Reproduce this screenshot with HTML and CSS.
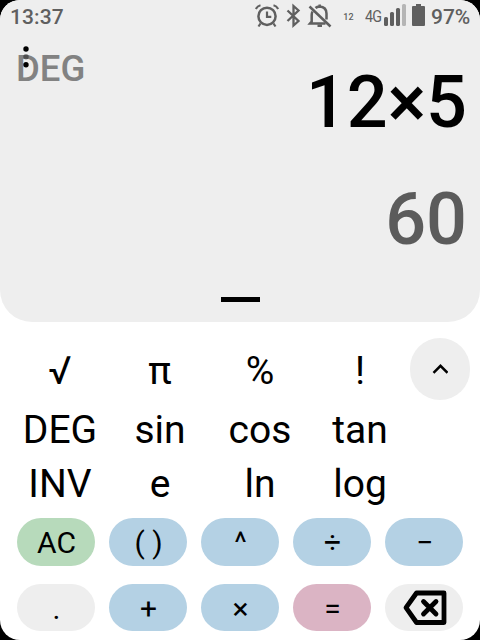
FILE: index.html
```html
<!DOCTYPE html>
<html lang="en">
<head>
<meta charset="utf-8">
<title>Calculator</title>
<link rel="stylesheet" href="styles.css">
</head>
<body>
<main class="screen">
  <section class="display">
    <header class="status">
      <span class="clock">13:37</span>
      <svg class="status-icons" width="80" height="32" viewBox="0 0 80 32" fill="none" stroke="#5f5f5f">
        <circle cx="12" cy="16.3" r="8.6" stroke-width="2.5"/>
        <path d="M12 11.5v5.3h4.3" stroke-width="2.2"/>
        <path d="M.8 9Q2.5 6 5.5 5.3M23.2 9Q21.5 6 18.5 5.3M5.5 23.500l-2 3M18.5 23.500l2 3" stroke-width="2.200"/>
        <path d="M32.500 10.500l11 10.500-5 4.500V6l5 4.500-11 10.500" stroke-width="2.300"/>
        <path d="M54.500 6.500l21 20" stroke-width="2.500"/>
        <path d="M60.500 8q1.500-1.300 4-1.500 7 .5 7 7v6M57.500 11.500q-.8 1.500-.8 3.500v6.500l-1.700 2h15.500" stroke-width="2.500"/>
        <path d="M62.500 25.700h4.500M64.700 4.500v2" stroke-width="2.500"/>
      </svg>
      <span class="small-count">12</span>
      <span class="network">4G</span>
      <svg class="signal" width="23" height="22" viewBox="0 0 23 22" fill="#5f5f5f">
        <rect x="0" y="13" width="4" height="9" rx="1.500"/>
        <rect x="6" y="8" width="4" height="14" rx="1.500"/>
        <rect x="12" y="4" width="4" height="18" rx="1.500"/>
        <rect x="18" y="0" width="4" height="22" rx="1.500" fill="#b5b5b5"/>
      </svg>
      <svg class="battery" width="13" height="22" viewBox="0 0 13 22" fill="#5f5f5f">
        <path d="M4 0h5v2h3q1 0 1 1v18q0 1-1 1H1q-1 0-1-1V3q0-1 1-1h3z"/>
      </svg>
      <span class="percent">97%</span>
    </header>
    <div class="mode">DEG
      <svg class="menu" width="6" height="24" viewBox="0 0 6 24">
        <circle cx="3" cy="4" r="2.700"/><circle cx="3" cy="11.700" r="2.700" opacity=".4"/><circle cx="3" cy="19.700" r="2.700"/>
      </svg>
    </div>
    <div class="expression">12×5</div>
    <div class="result">60</div>
    <div class="handle"></div>
  </section>

  <section class="functions">
    <span>√</span><span>π</span><span>%</span><span>!</span>
    <button class="toggle" aria-label="Collapse">
      <svg width="16" height="10" viewBox="0 0 16 10" fill="none" stroke="#000" stroke-width="2.500"><path d="M1.500 8.800l7-7 7 7"/></svg>
    </button>
    <span>DEG</span><span>sin</span><span>cos</span><span>tan</span><i></i>
    <span>INV</span><span>e</span><span>ln</span><span>log</span><i></i>
  </section>

  <section class="keys">
    <button class="key clear">AC</button>
    <button class="key">( )</button>
    <button class="key">^</button>
    <button class="key">÷</button>
    <button class="key">−</button>
    <button class="key plain">.</button>
    <button class="key">+</button>
    <button class="key">×</button>
    <button class="key equals">=</button>
    <button class="key plain" aria-label="Backspace">
      <svg class="backspace" width="44" height="36" viewBox="0 0 44 36" fill="none" stroke="#000" stroke-linejoin="round" stroke-linecap="round">
        <path d="M13.500 3H41v29.500H13.500L3 17.700z" stroke-width="4.800"/>
        <path d="M20.500 11.500l12.500 12.500M33 11.500l-12.500 12.500" stroke-width="4.800"/>
      </svg>
    </button>
  </section>
</main>
</body>
</html>
```
FILE: styles.css
```css
* { box-sizing: border-box; }

body {
  margin: 0;
  background: #000;
  font-family: Roboto, "Liberation Sans", sans-serif;
}

button {
  border: 0;
  padding: 0;
  font: inherit;
  color: #000;
}

.screen {
  width: 480px;
  height: 640px;
  background: #fff;
  border-radius: 20px;
  overflow: hidden;
}

.display {
  height: 322px;
  background: #eee;
  border-radius: 0 0 32px 32px;
  display: flex;
  flex-direction: column;
}

.status {
  height: 32px;
  flex: none;
  display: grid;
  grid-template-columns: 245px 110px 19px 28px 19px 1fr;
  padding-left: 10px;
  font-size: 21px;
  line-height: 34px;
  color: #5f5f5f;
}

.status > * { grid-row: 1; white-space: nowrap; }
.clock { grid-column: 1; font-weight: 500; letter-spacing: .1px; }
.status-icons { grid-column: 2; }
.small-count { grid-column: 2; justify-self: end; margin-right: 11px; font-size: 9px; font-weight: 500; letter-spacing: .3px; }
.network { grid-column: 3; font-size: 16.5px; letter-spacing: -.8px; transform: scaleX(.87); transform-origin: left; }
.signal { grid-column: 4; margin-top: 4px; }
.battery { grid-column: 5; margin-top: 4px; }
.percent { grid-column: 6; font-weight: 500; }

.mode {
  position: relative;
  height: 36px;
  flex: none;
  margin: 18px 0 0 16px;
  font-size: 36.5px;
  font-weight: 500;
  line-height: 37px;
  color: #828282;
}

.menu { position: absolute; left: 6.5px; top: -5px; fill: #000; }

.expression, .result {
  height: 84px;
  flex: none;
  padding-right: 13px;
  text-align: right;
  font-size: 72px;
  font-weight: 500;
  line-height: 84px;
}

.expression { margin-top: -25px; }
.result { margin-top: 33px; color: #5b5b5b; }

.handle {
  width: 39px;
  height: 5px;
  flex: none;
  margin: 35px 0 0 221px;
  background: #000;
}

.functions {
  height: 196px;
  padding: 16px 0 0 10px;
  display: grid;
  grid-template-columns: repeat(4, 100px) 60px;
  grid-template-rows: 64px 54px 54px;
  align-items: center;
  text-align: center;
  font-size: 39px;
  line-height: 54px;
}

.functions span { padding-top: 2px; }

.toggle {
  width: 60px;
  height: 62px;
  align-self: start;
  border-radius: 31px;
  background: #eee;
  display: grid;
  place-items: center;
}

.keys {
  padding: 0 17px;
  display: grid;
  grid-template-columns: repeat(5, 78px);
  grid-template-rows: 48px 47px;
  gap: 18px 14px;
}

.key {
  border-radius: 24px;
  padding: 2px 0 0 1px;
  background: #b4d1e4;
  font-size: 30px;
  line-height: 46px;
  display: flex;
  justify-content: center;
  align-items: center;
}

.backspace { margin: -2px 0 0 0; }
.clear { background: #b7dabb; }
.equals { background: #dbb4c4; }
.plain { background: #eee; }
```
